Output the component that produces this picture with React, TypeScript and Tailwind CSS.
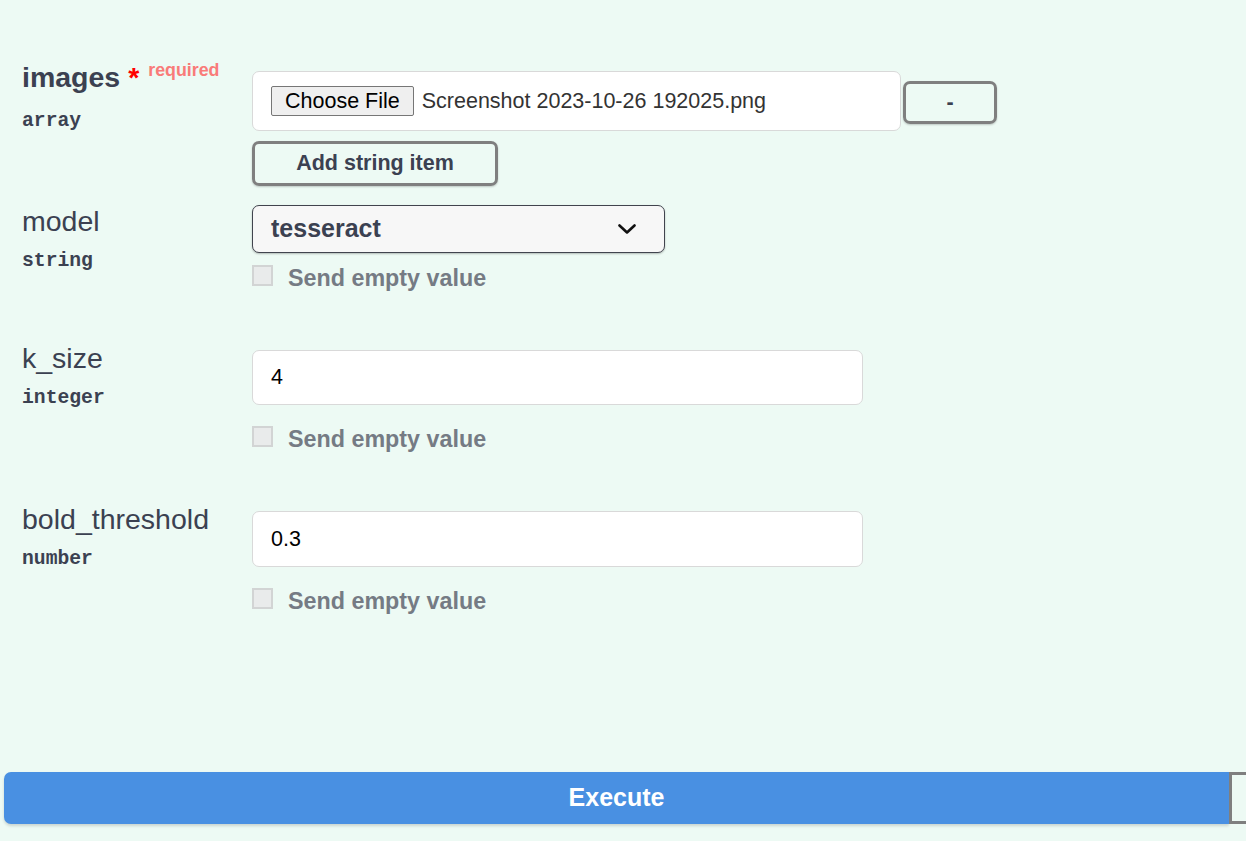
import React from 'react';

const sans = { fontFamily: '"Liberation Sans", Arial, sans-serif' };

function ParamLabel({ name, type, required }: { name: string; type: string; required?: boolean }) {
  return (
    <div className="w-[252px] shrink-0 pl-[22px]">
      <div className={`text-[28.5px] leading-[32px] text-[#3b4151] whitespace-nowrap ${required ? 'font-bold' : 'font-normal'}`}>
        {name}
        {required && (
          <>
            <span className="text-[#ff0000]"> *</span>
            <span className="relative -top-[11px] pl-[9px] text-[17.8px] font-bold text-[#f97b79]">required</span>
          </>
        )}
      </div>
      <div className="mt-[12px] font-['Liberation_Mono',monospace] text-[19.7px] leading-[24px] font-bold text-[#3b4151]">
        {type}
      </div>
    </div>
  );
}

function EmptyToggle() {
  return (
    <div className="flex items-start">
      <span className="mt-[1px] h-[21px] w-[21px] shrink-0 border-2 border-[#d2d4d4] bg-[#e9ebeb]" />
      <span className="ml-[15px] text-[23.3px] leading-[28px] font-bold text-[#757b84]">Send empty value</span>
    </div>
  );
}

function OutlineButton({ children, className }: { children: React.ReactNode; className: string }) {
  return (
    <button className={`rounded-[7px] border-[3px] border-[#7f7f7f] bg-transparent text-[21.5px] font-bold text-[#3b4151] shadow-[0_1px_2px_rgba(0,0,0,0.2)] ${className}`}>
      {children}
    </button>
  );
}

export default function App() {
  return (
    <div className="min-h-screen w-full overflow-hidden bg-[#edfaf4] pt-[61px]" style={sans}>
      {/* images */}
      <div className="flex items-start">
        <ParamLabel name="images" type="array" required />
        <div className="pt-[10px]">
          <div className="flex items-start">
            <div className="flex h-[60px] w-[649px] items-center rounded-[7px] border border-[#d9d9d9] bg-white pl-[18px]">
              <span className="flex h-[30px] items-center rounded-[2px] border border-[#767676] bg-[#efefef] px-[13px] text-[21.5px] text-black">
                Choose File
              </span>
              <span className="ml-[8px] text-[21.5px] text-[#333]">Screenshot 2023-10-26 192025.png</span>
            </div>
            <OutlineButton className="ml-[2px] mt-[10px] h-[43px] w-[94px]">-</OutlineButton>
          </div>
          <OutlineButton className="mt-[10px] h-[45px] w-[246px]">Add string item</OutlineButton>
        </div>
      </div>

      {/* model */}
      <div className="mt-[19px] flex items-start">
        <ParamLabel name="model" type="string" />
        <div>
          <div className="flex h-[48px] w-[413px] items-center justify-between rounded-[7px] border border-[#41444e] bg-[#f7f7f7] pl-[18px] pr-[28px] shadow-[0_1px_2px_rgba(0,0,0,0.25)]">
            <span className="text-[25px] font-bold text-[#3b4151]">tesseract</span>
            <svg width="18" height="10" viewBox="0 0 18 10" fill="none">
              <path d="M1.5 1.5 9 8.5l7.5-7" stroke="#111" strokeWidth="2.6" strokeLinecap="round" strokeLinejoin="round" />
            </svg>
          </div>
          <div className="mt-[11px]">
            <EmptyToggle />
          </div>
        </div>
      </div>

      {/* k_size */}
      <div className="mt-[50px] flex items-start">
        <ParamLabel name="k_size" type="integer" />
        <div className="pt-[8px]">
          <div className="flex h-[55px] w-[611px] items-center rounded-[7px] border border-[#d9d9d9] bg-white pl-[18px] text-[21.5px] text-black">
            4
          </div>
          <div className="mt-[20px]">
            <EmptyToggle />
          </div>
        </div>
      </div>

      {/* bold_threshold */}
      <div className="mt-[50px] flex items-start">
        <ParamLabel name="bold_threshold" type="number" />
        <div className="pt-[8px]">
          <div className="flex h-[56px] w-[611px] items-center rounded-[7px] border border-[#d9d9d9] bg-white pl-[18px] text-[21.5px] text-black">
            0.3
          </div>
          <div className="mt-[20px]">
            <EmptyToggle />
          </div>
        </div>
      </div>

      {/* execute */}
      <div className="mt-[157px] flex pl-[4px]">
        <button className="h-[52px] w-[1225px] shrink-0 rounded-l-[7px] bg-[#4990e2] text-[25px] font-bold text-white shadow-[0_2px_3px_rgba(0,0,0,0.15)]">
          Execute
        </button>
        <button className="h-[52px] w-[200px] shrink-0 border-[3px] border-[#7f7f7f] bg-transparent" />
      </div>
    </div>
  );
}
